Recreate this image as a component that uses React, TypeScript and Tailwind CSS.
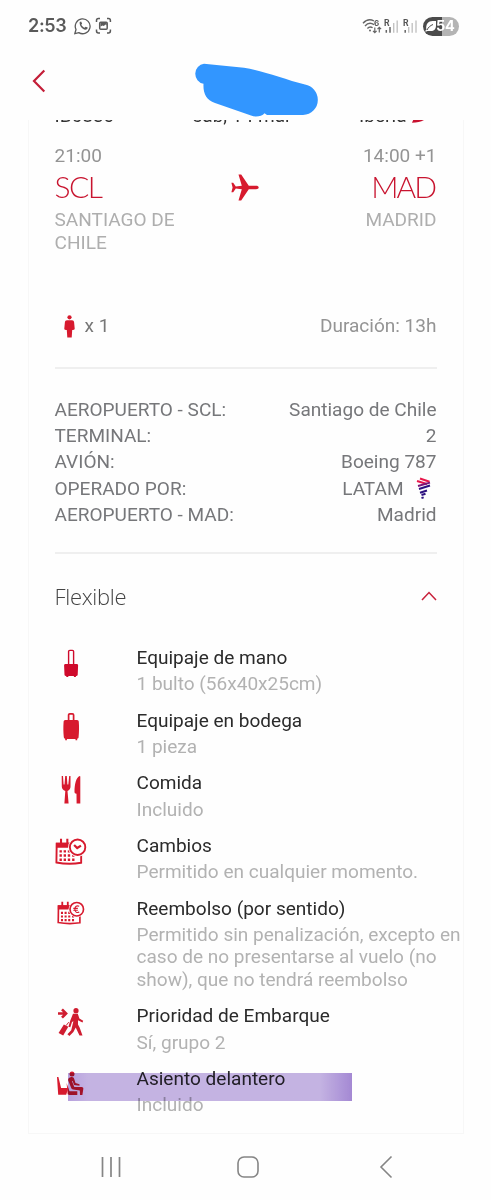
import React from "react";

type Feature = {
    title: string;
    detail: string;
    icon: React.ReactNode;
    highlighted?: boolean;
};

const details = [
    { label: "AEROPUERTO - SCL:", value: "Santiago de Chile" },
    { label: "TERMINAL:", value: "2" },
    { label: "AVIÓN:", value: "Boeing 787" },
    { label: "OPERADO POR:", value: "LATAM", logo: true },
    { label: "AEROPUERTO - MAD:", value: "Madrid" },
];

function CabinBagIcon() {
    return (
        <svg width="32" height="32" viewBox="0 0 32 32" fill="#cf0a2c">
            <path d="M13.6 18V4.600c0-.8.5-1.200 1.200-1.200h2.600c.7 0 1.200.4 1.200 1.200V18" fill="none" stroke="#cf0a2c" strokeWidth="1.400" />
            <path d="M10.5 17h11.200c.9 0 1.400.6 1.400 1.400l-.4 9.300c0 .7-.5 1.200-1.200 1.200h-.6v1.200h-2v-1.200h-5.600v1.200h-2v-1.200h-.6c-.7 0-1.100-.5-1.200-1.200l-.4-9.300c0-.8.5-1.400 1.400-1.400z" />
        </svg>
    );
}

function SuitcaseIcon() {
    return (
        <svg width="32" height="32" viewBox="0 0 32 32" fill="#d71a2e">
            <path d="M13.6 11V5c0-.8.5-1.200 1.200-1.200h2.600c.7 0 1.200.4 1.200 1.200v6" fill="none" stroke="#d71a2e" strokeWidth="1.700" />
            <path d="M10.400 10.100h11.600c1.200 0 1.700.7 1.800 1.800.4 5 .3 10-.2 15.200 0 1-.6 1.600-1.400 1.700v1.500h-1.700v-1.400h-8.600v1.400h-1.700v-1.500c-.8-.1-1.300-.7-1.400-1.700-.5-5.200-.6-10.200-.2-15.200.1-1.100.6-1.800 1.800-1.800z" />
        </svg>
    );
}

function CutleryIcon() {
    return (
        <svg width="32" height="32" viewBox="0 0 32 32" fill="#d71a2e">
            <path d="M6.700 4h1.300l.6 8.500h.9L10.200 4h1.600l.6 8.500h.9L14.200 4h1.300v10.500c0 2.300-1.100 3.800-3 4.400l1.100 12.700H9.400l.9-12.700c-2.200-.6-3.500-2.100-3.500-4.400z" />
            <path d="M24.700 4c.4 0 .6.2.6.6v27h-3.700l-.1-9.800c-1.300 0-2.100-.7-2-2 .1-8 1.600-14.200 5.200-15.800z" />
        </svg>
    );
}

function CalendarBase() {
    return (
        <g>
            <path d="M1.800 8.200h26v20.300c-8 1.300-17.500 1.300-26.300-.3z" fill="#fff" stroke="#d71a2e" strokeWidth="2" />
            <path d="M1 7.200h17v5.300H1zM5.300 3h2.200v5H5.300zM12 3h2.200v5H12z" fill="#d71a2e" />
            <path
                d="M4.800 15.200h2.500v2.500H4.800zM9.200 15.200h2.500v2.500H9.200zM13.600 15.200h2.500v2.500h-2.500zM4.800 19.500h2.500V22H4.800zM9.200 19.500h2.500V22H9.200zM13.600 19.500h2.500V22h-2.500zM18.200 19.500h2.500V22h-2.500zM4.800 24h2.500v2.500H4.800zM9.200 24h2.500v2.500H9.200zM13.600 24h2.500v2.500h-2.500zM18.200 24h2.500v2.500h-2.500z"
                fill="#d71a2e"
            />
            <circle cx="24" cy="12" r="10" fill="#fff" />
            <circle cx="24" cy="12" r="8.200" fill="#fff" stroke="#d71a2e" strokeWidth="2" />
        </g>
    );
}

function ChangesIcon() {
    return (
        <svg width="34" height="32" viewBox="0 0 34 32" fill="none">
            <CalendarBase />
            <path d="M20.300 9.600l3.300 3.200 4-2.500" stroke="#d71a2e" strokeWidth="2.400" />
        </svg>
    );
}

function RefundIcon() {
    return (
        <svg className="mb-[3px]" width="28" height="27" viewBox="0 0 34 32" fill="none">
            <CalendarBase />
            <path d="M27 8.500c-3-1.500-5.300.2-5.300 3.500s2.300 5 5.300 3.500M19.800 11h5.500M19.800 13.200h5.500" stroke="#d71a2e" strokeWidth="1.300" />
        </svg>
    );
}

function BoardingIcon() {
    return (
        <svg width="32" height="32" viewBox="0 0 32 32" fill="#cf1d30">
            <path d="M3 8.500h7M7 4.300l4.100 4.200L7 12.700" fill="none" stroke="#cf1d30" strokeWidth="2.600" />
            <circle cx="21" cy="5.700" r="2.600" />
            <path d="M18 8.800h4.800l1.600 4.700 3.800 2.300-.7 1.700-4.500-2.300v4.300l1.600 3 2.900 8.100h-3l-3.800-8-2.300 4.500-4 3.800-2-1.600 3.800-4 2.200-9-1.400.8-1.700 5.200-1.900-.5 1.900-6.300z" />
            <path d="M8.900 19.500l4.400 2.300-5.100 8.800-4.600-2.500z" />
            <path d="M11.200 20.500l2.500-3.300" fill="none" stroke="#cf1d30" />
        </svg>
    );
}

function SeatIcon() {
    return (
        <svg width="32" height="32" viewBox="0 0 32 32" fill="#d71a2e">
            <path d="M2 9h1.400l2.700 11h7.200l-2.100 6.700H3.200z" />
            <circle cx="17" cy="6" r="2.500" />
            <path d="M15.500 9.200c2.200-.7 3.300.2 3.800 2l1.200 3.900 4 1.100v1.600l-5.400-.8-1.500-4.100-.7.2 2.400 6h7.300c1.300 0 1.900.7 1.700 1.900l-.9 6h-2.400l-.2-4.600-6.800-.8c-.9-.1-1.400-.6-1.800-1.500l-3-7.500c-.4-1.500.5-2.800 2.300-3.400z" />
            <path d="M11.600 15l2.900 8.200h7.800v3.700H14c-.8 0-1.300-.4-1.400-1.200z" />
        </svg>
    );
}

const features: Feature[] = [
    { title: "Equipaje de mano", detail: "1 bulto (56x40x25cm)", icon: <CabinBagIcon /> },
    { title: "Equipaje en bodega", detail: "1 pieza", icon: <SuitcaseIcon /> },
    { title: "Comida", detail: "Incluido", icon: <CutleryIcon /> },
    { title: "Cambios", detail: "Permitido en cualquier momento.", icon: <ChangesIcon /> },
    {
        title: "Reembolso (por sentido)",
        detail: "Permitido sin penalización, excepto en caso de no presentarse al vuelo (no show), que no tendrá reembolso",
        icon: <RefundIcon />,
    },
    { title: "Prioridad de Embarque", detail: "Sí, grupo 2", icon: <BoardingIcon /> },
    { title: "Asiento delantero", detail: "Incluido", icon: <SeatIcon />, highlighted: true },
];

function StatusBar() {
    return (
        <div className="flex h-[52px] items-center pl-[28px] pr-[32px] text-[#5a5a5a]">
            <span className="w-[46px] font-['Inter'] text-[18px] font-semibold leading-none tracking-[-0.300px]">2:53</span>
            <svg width="40" height="18" viewBox="0 0 40 18" fill="none" stroke="#5a5a5a" strokeWidth="1.300">
                <path d="M.8 16.700l1.200-4.200A7.400 7.400 0 1 1 4.800 15.600z" />
                <path d="M5.700 5l1.400-.5 1 2-.8 1.300c.8 1.400 1.800 2.300 3.200 3l1.100-1.100 2.100.9c0 1.300-1 2.200-2.200 2.200-3.600-.8-6.200-4-5.800-7.800z" fill="#5a5a5a" stroke="none" />
                <path d="M22.500 5V3.500c0-1.300.6-1.900 1.900-1.900H26M33 1.600h1.500c1.300 0 1.900.6 1.900 1.900V5M36.400 12.500V14c0 1.300-.6 1.900-1.900 1.900H33M26 15.900h-1.600c-1.300 0-1.900-.6-1.900-1.900v-1.500" strokeWidth="1.500" />
                <rect x="25.700" y="5.300" width="7.500" height="7" rx="1" strokeWidth="1.500" />
                <path d="M26.500 9.500l2-1 1.400.5 1.500-1.400 1.300 1V6h-6.200z" fill="#5a5a5a" stroke="none" />
            </svg>
            <svg className="ml-auto" width="58" height="20" viewBox="0 0 58 20" fill="none" stroke="#666" strokeWidth="1.400">
                <path d="M1 7.200C4.200 3.700 8.500 3 12 5M3 10c2.600-2.900 6-3.300 9-1.300M5.400 12.500c1.500-1.600 3.500-1.900 5.200-.7" />
                <circle cx="8" cy="14.500" r="1" fill="#666" stroke="none" />
                <path d="M12.800 11.500v5M11 14.800l1.800 1.900 1.800-1.900M17.300 16.500v-5M15.500 13.200l1.800-1.900 1.800 1.900" strokeWidth="1.200" />
                <path d="M24.300 14v2.800M28 11v5.800" strokeWidth="1.500" />
                <path d="M31.700 7v9.800M35.200 4.500v12.300M46.700 11v5.800M50.200 7v9.800M54 4.500v12.300" stroke="#c2c2c2" />
                <path d="M43.200 14v2.800" strokeWidth="1.500" />
                <text x="12" y="9.500" fill="#555" stroke="none" fontFamily="Inter" fontSize="8" fontWeight="700">6</text>
                <text x="22" y="9.500" fill="#555" stroke="none" fontFamily="Inter" fontSize="8.500" fontWeight="700">R</text>
                <text x="41" y="9.500" fill="#555" stroke="none" fontFamily="Inter" fontSize="8.500" fontWeight="700">R</text>
            </svg>
            <div className="ml-[3px] flex h-[19px] w-[36px] items-center rounded-full bg-linear-to-r from-[#4b4b4b] from-54% to-[#b4b4b4] to-54% pl-[2px] text-white">
                <svg className="shrink-0" width="11" height="12" viewBox="0 0 11 12" fill="#fff">
                    <path d="M11 1v4.500C11 9.200 9 11 6 11H2.500l-1.800.8-.5-1 1.200-.9C.3 4.300 3.500 1 7.500 1z" />
                    <path d="M2 10c1.300-2.700 3.200-4.400 6-5.500" stroke="#4b4b4b" fill="none" />
                </svg>
                <span className="font-['Inter'] text-[14.500px] font-bold leading-none tracking-[-0.300px]">54</span>
            </div>
        </div>
    );
}

function Header() {
    return (
        <header className="flex h-[68px] pl-[32px]">
            <svg className="mt-[17px]" width="14" height="24" viewBox="0 0 14 24" fill="none" stroke="#c41e38" strokeWidth="2.200">
                <path d="M12.300 1.500L2 12l10.300 10.500" />
            </svg>
            <svg className="ml-[143px] mt-[8px] overflow-visible" width="130" height="58" viewBox="190 60 130 58" fill="#3296ff">
                <path d="M205 63.700L245 67.800C262 70 285 79 306 84.500A15.500 15.500 0 0 1 318.800 99.500A15 15 0 0 1 304 115L268 115L265.500 113.200C263 116.500 256 117.500 252 115.500L216 103C207 100 204 93 204.500 83.800A10.200 10.200 0 0 1 205 63.700Z" />
            </svg>
        </header>
    );
}

function LatamLogo() {
    return (
        <svg className="ml-[12px] mr-[6px] mb-[2px]" width="15" height="22" viewBox="0 0 15 22" fill="none" strokeWidth="2">
            <path d="M4 1.500l9.500 3.200" stroke="#e8174b" />
            <path d="M1 4l10 3" stroke="#e8174b" />
            <path d="M2 9l12-3.400" stroke="#7a1478" />
            <path d="M3 12l11-3.500M4 15.800l7-2.300M5.500 18l4-1.300M5.500 21l2.200-.6" stroke="#2d1280" />
        </svg>
    );
}

function FlightSummary() {
    return (
        <section className="h-[247px]">
            {/* scrolled row, only its last pixels stay below the header */}
            <div className="flex h-[21px] items-end overflow-visible">
                <div className="mb-[14px] flex h-[22px] w-full leading-[22px] text-[#333]">
                    <span className="w-[138px]">IB6830</span>
                    <span>sáb, 14 mar</span>
                    <span className="ml-auto">Iberia</span>
                    <svg className="ml-[4px] mr-[7px] mt-[9px]" width="19" height="10" viewBox="0 0 20 10">
                        <path d="M5 0h15c-4 6-10 9-19 9z" fill="#c8102e" />
                    </svg>
                </div>
            </div>
            <div className="mt-[4px] flex h-[22px] justify-between leading-[22px] text-[#949494]">
                <span>21:00</span>
                <span>14:00 +1</span>
            </div>
            <div className="flex h-[42px] items-center font-['Lato'] text-[30px] font-light text-[#c8142f]">
                <span className="w-[80px] pb-[3px] tracking-[-1.500px]">SCL</span>
                <svg className="ml-[96px] mb-[2px]" width="28" height="27" viewBox="0 0 28 27" fill="#d71a2e">
                    <path d="M27.700 13.500c0-1.200-1.200-1.700-2.600-1.700h-7.300L10.200.4H7.500l3.300 11.300-6 .7L2.200 8.800H.4l1.200 4.700-1.200 4.700h1.800l2.600-3.600 6 .7-3.300 11.300h2.700l7.600-11.400h7.300c1.400 0 2.600-.5 2.600-1.700z" />
                </svg>
                <span className="ml-auto pb-[3px] pr-[1.500px] tracking-[-2px]">MAD</span>
            </div>
            <div className="flex justify-between leading-[22.500px] text-[#aeaeae]">
                <span className="w-[150px]">SANTIAGO DE CHILE</span>
                <span>MADRID</span>
            </div>
            <div className="mt-[60px] flex h-[24px] items-center leading-[24px] text-[#949494]">
                <svg className="ml-[9px]" width="11" height="23" viewBox="0 0 11 23" fill="#d71a2e">
                    <circle cx="5.500" cy="2.300" r="2.100" />
                    <path d="M3 5.300h5c1.300 0 1.900.8 2.100 2l.6 6.300c.1 1-.7 1.300-1.600 1.300H8.200l-.5 7.600H3.300l-.5-7.600h-1C.8 14.900.2 14.600.3 13.600l.6-6.300c.2-1.200.8-2 2.100-2z" />
                </svg>
                <span className="ml-[10px] text-[#777]">x 1</span>
                <span className="ml-auto">Duración: 13h</span>
            </div>
        </section>
    );
}

function FlightDetails() {
    return (
        <dl className="h-[187px] border-y-2 border-[#efefef] pt-[28px] text-[#76777a]">
            {details.map((d) => (
                <div key={d.label} className="flex h-[26.200px] items-center justify-between leading-[26px]">
                    <dt>{d.label}</dt>
                    <dd className="flex items-center">
                        {d.value}
                        {d.logo && <LatamLogo />}
                    </dd>
                </div>
            ))}
        </dl>
    );
}

function FeatureRow({ feature }: { feature: Feature }) {
    return (
        <li className="relative mb-[12px] flex">
            <div className="flex h-[36px] w-[82px] shrink-0 items-center">
                <div className="flex w-[32px] justify-center">{feature.icon}</div>
            </div>
            <div className="w-[330px] shrink-0">
                <p className="h-[28.200px] leading-[26px] text-[#2b2b2b]">{feature.title}</p>
                <p className="leading-[22.500px] text-[#b2b2b2]">{feature.detail}</p>
            </div>
            {feature.highlighted && (
                <div className="absolute left-[13px] top-[7px] h-[28px] w-[284px] bg-linear-to-r from-[#b8a1de] via-[#c5b4e3] via-7% to-[#c5b4e3] to-88% mix-blend-multiply">
                    <div className="ml-auto h-full w-[32px] bg-linear-to-r from-[#fff] to-[#d6c3ef] mix-blend-multiply" />
                </div>
            )}
        </li>
    );
}

function NavBar() {
    return (
        <nav className="flex h-[66px] items-center pl-[100px]">
            <svg width="22" height="22" viewBox="0 0 22 22" stroke="#858585" strokeWidth="1.700">
                <path d="M2.500 1v20M11 1v20M19.500 1v20" />
            </svg>
            <svg className="ml-[115px]" width="22" height="22" viewBox="0 0 22 22" fill="none" stroke="#858585" strokeWidth="1.600">
                <rect x="1" y="1" width="20" height="20" rx="6" />
            </svg>
            <svg className="ml-[120px]" width="14" height="24" viewBox="0 0 14 24" fill="none" stroke="#858585" strokeWidth="1.600">
                <path d="M12.500 1.500L2 12l10.500 10.500" />
            </svg>
        </nav>
    );
}

export default function App() {
    return (
        <div className="h-[1200px] w-[491px] overflow-hidden bg-[#fefefe] font-['Roboto',sans-serif] text-[19.050px]">
            <StatusBar />
            <Header />
            <main className="ml-[28px] h-[1014px] w-[436px] overflow-hidden border-x border-b border-[#f7f7f7] pl-[25.500px] pr-[26.500px]">
                <FlightSummary />
                <FlightDetails />
                <section>
                    <div className="flex h-[91px] items-center justify-between pb-[7px]">
                        <h2 className="font-['Open_Sans'] text-[22px] font-light tracking-[-0.300px] text-[#444]">Flexible</h2>
                        <svg width="16" height="10" viewBox="0 0 16 10" fill="none" stroke="#c8213b" strokeWidth="1.500">
                            <path d="M1 9l7-7.500L15 9" />
                        </svg>
                    </div>
                    <ul>
                        {features.map((f) => (
                            <FeatureRow key={f.title} feature={f} />
                        ))}
                    </ul>
                </section>
            </main>
            <NavBar />
        </div>
    );
}
